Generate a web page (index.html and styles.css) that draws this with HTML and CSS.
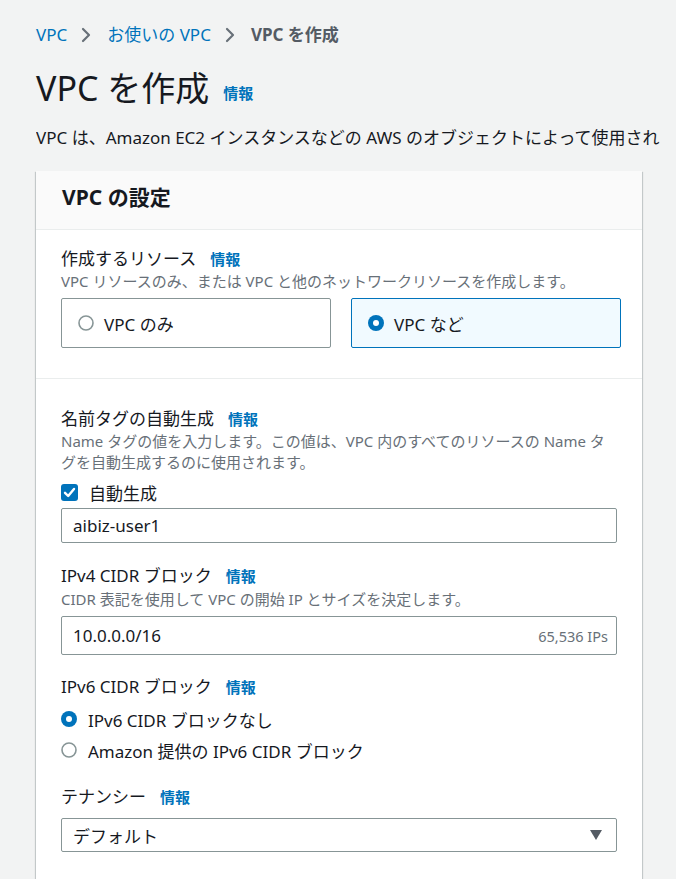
FILE: index.html
```html
<!DOCTYPE html>
<html lang="ja">
<head>
<meta charset="utf-8">
<title>VPC を作成</title>
<link rel="stylesheet" href="styles.css">
</head>
<body>
<div class="page">
  <nav class="crumbs">
    <a class="crumb-link">VPC</a>
    <svg class="chev" width="12" height="16" viewBox="0 0 12 16"><path d="M3 2 L9 8 L3 14" fill="none" stroke="#687078" stroke-width="2.2" stroke-linecap="round" stroke-linejoin="round"/></svg>
    <a class="crumb-link">お使いの VPC</a>
    <svg class="chev" width="12" height="16" viewBox="0 0 12 16"><path d="M3 2 L9 8 L3 14" fill="none" stroke="#687078" stroke-width="2.2" stroke-linecap="round" stroke-linejoin="round"/></svg>
    <span class="crumb-current">VPC を作成</span>
  </nav>

  <h1 class="title">VPC を作成<a class="info info-title">情報</a></h1>

  <p class="desc">VPC は、Amazon EC2 インスタンスなどの AWS のオブジェクトによって使用され</p>

  <div class="card">
    <div class="card-head">VPC の設定</div>

    <div class="section section-first">
      <div class="label">作成するリソース<a class="info">情報</a></div>
      <div class="hint">VPC リソースのみ、または VPC と他のネットワークリソースを作成します。</div>
      <div class="tiles">
        <div class="tile">
          <svg class="radio" width="16" height="16" viewBox="0 0 16 16"><circle cx="8" cy="8" r="7" fill="#fff" stroke="#879596" stroke-width="1.6"/></svg>
          <span>VPC のみ</span>
        </div>
        <div class="tile tile-selected">
          <svg class="radio" width="16" height="16" viewBox="0 0 16 16"><circle cx="8" cy="8" r="8" fill="#0073bb"/><circle cx="8" cy="8" r="3" fill="#fff"/></svg>
          <span>VPC など</span>
        </div>
      </div>
    </div>

    <div class="section section-rest">
      <div class="field">
        <div class="label">名前タグの自動生成<a class="info">情報</a></div>
        <div class="hint">Name タグの値を入力します。この値は、VPC 内のすべてのリソースの Name タ<br>グを自動生成するのに使用されます。</div>
        <div class="check-row">
          <span class="checkbox"><svg width="17" height="17" viewBox="0 0 17 17"><rect x="0" y="0" width="17" height="17" rx="3" fill="#0073bb"/><path d="M4 8.8 L7.2 12 L13 5" fill="none" stroke="#fff" stroke-width="2.4" stroke-linecap="round" stroke-linejoin="round"/></svg></span>
          <span class="check-label">自動生成</span>
        </div>
        <div class="input input-name">aibiz-user1</div>
      </div>

      <div class="field field-ipv4">
        <div class="label">IPv4 CIDR ブロック<a class="info">情報</a></div>
        <div class="hint hint-tight">CIDR 表記を使用して VPC の開始 IP とサイズを決定します。</div>
        <div class="input input-cidr"><span class="input-value">10.0.0.0/16</span><span class="suffix">65,536 IPs</span></div>
      </div>

      <div class="field field-ipv6">
        <div class="label">IPv6 CIDR ブロック<a class="info">情報</a></div>
        <div class="radio-row radio-row-first">
          <svg class="radio" width="16" height="16" viewBox="0 0 16 16"><circle cx="8" cy="8" r="8" fill="#0073bb"/><circle cx="8" cy="8" r="3" fill="#fff"/></svg>
          <span>IPv6 CIDR ブロックなし</span>
        </div>
        <div class="radio-row">
          <svg class="radio" width="16" height="16" viewBox="0 0 16 16"><circle cx="8" cy="8" r="7" fill="#fff" stroke="#879596" stroke-width="1.6"/></svg>
          <span>Amazon 提供の IPv6 CIDR ブロック</span>
        </div>
      </div>

      <div class="field field-tenancy">
        <div class="label">テナンシー<a class="info">情報</a></div>
        <div class="select">
          <span>デフォルト</span>
          <svg width="12" height="10" viewBox="0 0 12 10"><path d="M0 0 H12 L6 10 Z" fill="#545b64"/></svg>
        </div>
      </div>
    </div>
  </div>
</div>
</body>
</html>
```

FILE: styles.css
```css
html, body {
  margin: 0;
  padding: 0;
  overflow: hidden;
}

body {
  background: #f2f3f3;
  color: #16191f;
  font-family: "Noto Sans", "Noto Sans CJK JP", sans-serif;
  width: 676px;
  height: 879px;
}

.page {
  padding: 23px 0 0 36px;
}

.crumbs {
  display: flex;
  align-items: center;
  height: 24px;
  font-size: 17px;
  line-height: 24px;
}

.crumb-link {
  color: #0073bb;
}

.chev {
  margin: 0 15px 0 13px;
}

.crumb-current {
  color: #545b64;
  font-weight: 700;
}

.title {
  margin: 19px 0 0;
  height: 44px;
  font-size: 34px;
  line-height: 44px;
  font-weight: 400;
  display: flex;
  align-items: baseline;
}

.info {
  color: #0073bb;
  font-weight: 700;
  font-size: 15px;
  line-height: 1;
  margin-left: 14px;
}

.info-title {
  margin-left: 14px;
  position: relative;
  top: -2px;
}

.desc {
  margin: 16px 0 0;
  font-size: 17px;
  line-height: 24px;
  white-space: nowrap;
  overflow: hidden;
  width: 640px;
}

.card {
  margin-top: 21px;
  width: 606px;
  background: #fff;
  box-shadow: 0 1px 1px 0 rgba(0, 28, 36, 0.3), 1px 1px 1px 0 rgba(0, 28, 36, 0.15), -1px 1px 1px 0 rgba(0, 28, 36, 0.15);
  height: 720px;
}

.card-head {
  background: #fafafa;
  padding: 11px 26px 17px;
  border-bottom: 1px solid #eaeded;
  font-size: 21px;
  line-height: 30px;
  font-weight: 700;
}

.section {
  padding: 0 25px;
}

.section-first {
  padding-top: 17px;
  padding-bottom: 30px;
  border-bottom: 1px solid #eaeded;
}

.section-rest {
  padding-top: 28px;
}

.label {
  font-size: 17px;
  line-height: 24px;
  height: 24px;
  display: flex;
  align-items: baseline;
}

.hint {
  font-size: 15px;
  line-height: 21px;
  color: #687078;
  white-space: nowrap;
}

.hint-tight {
  margin-top: 1px;
}

.tiles {
  margin-top: 6px;
  display: grid;
  grid-template-columns: 270px 270px;
  column-gap: 20px;
}

.tile {
  box-sizing: border-box;
  height: 50px;
  border: 1px solid #879596;
  border-radius: 2px;
  display: flex;
  align-items: center;
  padding-left: 16px;
  font-size: 17px;
}

.tile-selected {
  border-color: #0073bb;
  background: #f1faff;
}

.radio {
  flex: none;
  margin-right: 10px;
}

.check-row {
  margin-top: 7px;
  height: 24px;
  display: flex;
  align-items: center;
  font-size: 17px;
}

.checkbox {
  display: flex;
  margin-right: 11px;
}

.input {
  box-sizing: border-box;
  border: 1px solid #879596;
  border-radius: 2px;
  padding: 0 8px 0 11px;
  display: flex;
  align-items: center;
  font-size: 17px;
  width: 556px;
}

.input-name {
  margin-top: 4px;
  height: 35px;
}

.field-ipv4 {
  margin-top: 21px;
}

.input-cidr {
  margin-top: 6px;
  height: 39px;
  justify-content: space-between;
}

.suffix {
  font-size: 14.5px;
  color: #687078;
}

.field-ipv6 {
  margin-top: 20px;
}

.radio-row {
  margin-top: 7px;
  height: 24px;
  display: flex;
  align-items: center;
  font-size: 17px;
}

.radio-row .radio {
  margin-right: 11px;
}

.radio-row-first {
  margin-top: 8px;
}

.field-tenancy {
  margin-top: 23px;
}

.select {
  box-sizing: border-box;
  margin-top: 9px;
  height: 34px;
  width: 556px;
  border: 1px solid #879596;
  border-radius: 2px;
  padding: 0 14px 0 11px;
  display: flex;
  align-items: center;
  justify-content: space-between;
  font-size: 17px;
}
```
